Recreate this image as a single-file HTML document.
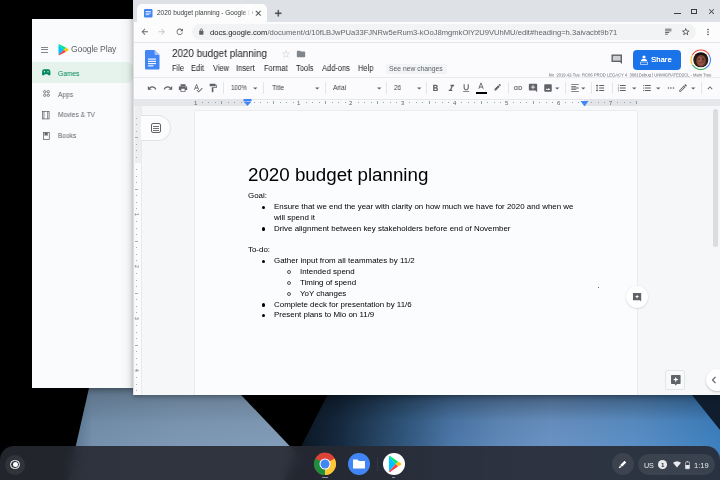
<!DOCTYPE html>
<html><head><meta charset="utf-8">
<style>
*{margin:0;padding:0;box-sizing:border-box}
html,body{width:720px;height:480px;overflow:hidden;background:#000;font-family:"Liberation Sans",sans-serif;position:relative}
.a{position:absolute}
.t{position:absolute;white-space:pre;line-height:1;will-change:transform}
svg.a{overflow:visible}
</style></head><body>
<svg class="a" style="left:0;top:0" width="720" height="480" viewBox="0 0 720 480">
<defs>
<linearGradient id="lg1" gradientUnits="userSpaceOnUse" x1="75" y1="0" x2="287" y2="0">
<stop offset="0" stop-color="#5e7894"/><stop offset="0.08" stop-color="#7591ad"/><stop offset="0.5" stop-color="#7e99b5"/><stop offset="1" stop-color="#829db9"/>
</linearGradient>
<linearGradient id="lg2" gradientUnits="userSpaceOnUse" x1="296" y1="0" x2="720" y2="0">
<stop offset="0" stop-color="#0a1420"/><stop offset="0.1" stop-color="#15293f"/><stop offset="0.245" stop-color="#2f5479"/><stop offset="0.365" stop-color="#4b77a8"/><stop offset="0.48" stop-color="#6089b9"/><stop offset="0.6" stop-color="#6a93c4"/><stop offset="0.8" stop-color="#5a8fc6"/><stop offset="1" stop-color="#3d80c0"/>
</linearGradient>
<linearGradient id="lg3" gradientUnits="userSpaceOnUse" x1="0" y1="395" x2="0" y2="447">
<stop offset="0" stop-color="#000" stop-opacity="0.35"/><stop offset="0.5" stop-color="#000" stop-opacity="0.05"/><stop offset="1" stop-color="#000" stop-opacity="0"/>
</linearGradient>
<linearGradient id="lg4" gradientUnits="userSpaceOnUse" x1="0" y1="388" x2="0" y2="447"><stop offset="0" stop-color="#000" stop-opacity="0.22"/><stop offset="0.6" stop-color="#000" stop-opacity="0.04"/><stop offset="1" stop-color="#000" stop-opacity="0"/></linearGradient>
</defs>
<polygon points="92,375 222,375 322,480 68,480" fill="url(#lg1)"/>
<polygon points="92,375 222,375 322,480 68,480" fill="url(#lg4)"/>
<polygon points="335.2,380 720,380 720,480 284,480" fill="url(#lg2)"/>
<polygon points="335.2,380 720,380 720,480 284,480" fill="url(#lg3)"/>
<polygon points="680,380 720,380 720,430" fill="#0f1d2e"/>
</svg>
<div class="a" style="left:32px;top:19px;width:110px;height:369px;background:#fafbfd;box-shadow:0 2px 6px rgba(0,0,0,0.35)"></div>
<div class="a" style="left:41px;top:46.9px;width:7.4px;height:0.9px;background:#80868b;"></div>
<div class="a" style="left:41px;top:49.2px;width:7.4px;height:0.9px;background:#80868b;"></div>
<div class="a" style="left:41px;top:51.5px;width:7.4px;height:0.9px;background:#80868b;"></div>
<svg class="a" style="left:57.5px;top:43.5px" width="11" height="11.5" viewBox="0 0 22 23">
<path d="M1 1 L12 11.5 L1 22 Z" fill="#00c3ff"/>
<path d="M1 1 L12 11.5 L16 7.5 L3 0.5Z" fill="#00e676"/>
<path d="M1 22 L12 11.5 L16 15.5 L3 22.5Z" fill="#ff3a44"/>
<path d="M12 11.5 L16 7.5 L21 10.5 Q22 11.5 21 12.5 L16 15.5 Z" fill="#ffc107"/>
</svg>
<div class="t" style="left:71.30px;top:45.12px;font-size:8.6px;color:#5f6368;letter-spacing:-0.15px;">Google Play</div>
<div class="a" style="left:32px;top:62px;width:101px;height:20.5px;background:#e6f3ec;border-radius:0 6px 6px 0"></div>
<svg class="a" style="left:42px;top:69px" width="8.5" height="7" viewBox="0 0 24 20"><path d="M6 1h12c3 0 5 2 5.5 5l0.5 9c0 3-3 4.5-5 2.5L16 15H8l-3 2.5C3 19.5 0 18 0 15l0.5-9C1 3 3 1 6 1z" fill="#01875f"/><circle cx="7" cy="8" r="2" fill="#e6f3ec"/><circle cx="17" cy="8" r="2" fill="#e6f3ec"/></svg>
<div class="t" style="left:57.70px;top:69.67px;font-size:7.0px;color:#01875f;transform:scaleX(0.95);transform-origin:0 0;">Games</div>
<svg class="a" style="left:42.8px;top:90.3px" width="7" height="7" viewBox="0 0 14 14" fill="none" stroke="#5f6368" stroke-width="1.6"><circle cx="3.5" cy="3.5" r="2.4"/><circle cx="10.5" cy="3.5" r="2.4"/><circle cx="3.5" cy="10.5" r="2.4"/><circle cx="10.5" cy="10.5" r="2.4"/></svg>
<div class="t" style="left:58.00px;top:90.77px;font-size:7.0px;color:#5f6368;transform:scaleX(0.95);transform-origin:0 0;">Apps</div>
<svg class="a" style="left:42.4px;top:110.5px" width="7.6" height="8.3" viewBox="0 0 16 18" fill="none" stroke="#5f6368" stroke-width="1.6"><rect x="0.8" y="0.8" width="14.4" height="16.4"/><line x1="4" y1="1" x2="4" y2="17"/><line x1="12" y1="1" x2="12" y2="17"/></svg>
<div class="t" style="left:58.00px;top:111.66px;font-size:6.9px;color:#5f6368;transform:scaleX(0.95);transform-origin:0 0;">Movies &amp; TV</div>
<svg class="a" style="left:43.1px;top:131.7px" width="6.7" height="7.9" viewBox="0 0 14 16" fill="none" stroke="#5f6368" stroke-width="1.6"><rect x="0.8" y="0.8" width="12.4" height="14.4"/><path d="M4 1v6l2.5-1.5L9 7V1" fill="#5f6368"/></svg>
<div class="t" style="left:58.00px;top:132.96px;font-size:6.9px;color:#5f6368;transform:scaleX(0.95);transform-origin:0 0;">Books</div>
<div class="a" style="left:119px;top:19px;width:14px;height:369px;background:linear-gradient(90deg,rgba(0,0,0,0),rgba(0,0,0,0.02) 50%,rgba(0,0,0,0.08));"></div>
<div class="a" style="left:133px;top:0px;width:587px;height:395px;background:#dee1e6;box-shadow:0 2px 5px rgba(0,0,0,0.28)"></div>
<div class="a" style="left:137px;top:4px;width:130px;height:19px;background:#fcfcfd;border-radius:5px 5px 0 0"></div>
<svg class="a" style="left:144px;top:9px" width="8.5" height="8.5" viewBox="0 0 16 16"><rect x="0" y="0" width="16" height="16" rx="2" fill="#4285f4"/><rect x="3" y="4" width="10" height="1.5" fill="#fff"/><rect x="3" y="7" width="10" height="1.5" fill="#fff"/><rect x="3" y="10" width="7" height="1.5" fill="#fff"/></svg>
<div class="t" style="left:156.70px;top:10.30px;font-size:6.5px;color:#3c4043;">2020 budget planning - Google D</div>
<div class="a" style="left:242px;top:5px;width:10px;height:14px;background:linear-gradient(90deg,rgba(255,255,255,0),#fff 85%);"></div>
<svg class="a" style="left:254.10px;top:8.90px" width="8.6" height="8.6" viewBox="0 0 24 24"><path d="M19 6.41L17.59 5 12 10.59 6.41 5 5 6.41 10.59 12 5 17.59 6.41 19 12 13.41 17.59 19 19 17.59 13.41 12z" fill="#3c4043" stroke="#3c4043" stroke-width="0.8"/></svg>
<svg class="a" style="left:273.15px;top:7.75px" width="10.5" height="10.5" viewBox="0 0 24 24"><path d="M19 13h-6v6h-2v-6H5v-2h6V5h2v6h6v2z" fill="#3c4043" stroke="#3c4043" stroke-width="0.9"/></svg>
<div class="a" style="left:673.5px;top:12.8px;width:7px;height:1px;background:#3c4043;"></div>
<div class="a" style="left:690.8px;top:8.6px;width:6.2px;height:5.6px;border:1px solid #3c4043"></div>
<svg class="a" style="left:706.90px;top:6.80px" width="9" height="9" viewBox="0 0 24 24"><path d="M19 6.41L17.59 5 12 10.59 6.41 5 5 6.41 10.59 12 5 17.59 6.41 19 12 13.41 17.59 19 19 17.59 13.41 12z" fill="#3c4043" /></svg>
<div class="a" style="left:133px;top:22px;width:587px;height:21px;background:#fcfcfd;"></div>
<div class="a" style="left:133px;top:42px;width:587px;height:1px;background:#e3e5e8;"></div>
<svg class="a" style="left:139.95px;top:26.85px" width="9.5" height="9.5" viewBox="0 0 24 24"><path d="M20 11H7.83l5.59-5.59L12 4l-8 8 8 8 1.41-1.41L7.83 13H20v-2z" fill="#5f6368" /></svg>
<svg class="a" style="left:157.25px;top:26.85px" width="9.5" height="9.5" viewBox="0 0 24 24"><path d="M12 4l-1.41 1.41L16.17 11H4v2h12.17l-5.58 5.59L12 20l8-8z" fill="#c4c7ca" /></svg>
<svg class="a" style="left:174.65px;top:26.85px" width="9.5" height="9.5" viewBox="0 0 24 24"><path d="M17.65 6.35C16.2 4.9 14.21 4 12 4c-4.42 0-7.99 3.58-7.99 8s3.57 8 7.99 8c3.73 0 6.84-2.55 7.73-6h-2.08c-.82 2.33-3.04 4-5.65 4-3.31 0-6-2.69-6-6s2.69-6 6-6c1.66 0 3.14.69 4.22 1.78L13 11h7V4l-2.35 2.35z" fill="#5f6368" /></svg>
<div class="a" style="left:191.5px;top:24px;width:504px;height:15.5px;background:#f1f3f4;border-radius:8px"></div>
<svg class="a" style="left:198.5px;top:28px" width="4.6" height="6.8" viewBox="0 0 10 15"><path d="M2.6 6.5V4.3A2.4 2.4 0 0 1 7.4 4.3V6.5" fill="none" stroke="#5f6368" stroke-width="1.7"/><rect x="0.3" y="6.3" width="9.4" height="8.4" rx="1.2" fill="#5f6368"/></svg>
<div class="t" style="left:209.60px;top:28.57px;font-size:7.6px;color:#202124;">docs.google.com<span style="color:#62666b">/document/d/10fLBJwPUa33FJNRw5eRum3-kOoJ8mgmkOlY2U9VUhMU/edit#heading=h.3aivacbt9b71</span></div>
<svg class="a" style="left:664.15px;top:27.35px" width="8.5" height="8.5" viewBox="0 0 24 24"><path d="M3 5h18v2H3zM3 10h18v2H3zM3 15h12v2H3zM3 19h8v2H3z" fill="#3c4043" /></svg>
<svg class="a" style="left:681.25px;top:26.85px" width="9.5" height="9.5" viewBox="0 0 24 24"><path d="M22 9.24l-7.19-.62L12 2 9.19 8.63 2 9.24l5.46 4.73L5.82 21 12 17.27 18.18 21l-1.63-7.03L22 9.24zM12 15.4l-3.76 2.27 1-4.28-3.32-2.88 4.38-.38L12 6.1l1.71 4.04 4.38.38-3.32 2.88 1 4.28L12 15.4z" fill="#3c4043" /></svg>
<svg class="a" style="left:703.00px;top:26.60px" width="10" height="10" viewBox="0 0 24 24"><path d="M12 8c1.1 0 2-.9 2-2s-.9-2-2-2-2 .9-2 2 .9 2 2 2zm0 2c-1.1 0-2 .9-2 2s.9 2 2 2 2-.9 2-2-.9-2-2-2zm0 6c-1.1 0-2 .9-2 2s.9 2 2 2 2-.9 2-2-.9-2-2-2z" fill="#3c4043" /></svg>
<div class="a" style="left:133px;top:43px;width:587px;height:34px;background:#fbfbfd;"></div>
<svg class="a" style="left:145px;top:50px" width="14.5" height="19.6" viewBox="0 0 29 39"><path d="M2.5 0H19L29 10V36.5C29 37.9 27.9 39 26.5 39H2.5C1.1 39 0 37.9 0 36.5V2.5C0 1.1 1.1 0 2.5 0Z" fill="#4285f4"/><path d="M19 0L29 10H21.5C20.1 10 19 8.9 19 7.5Z" fill="#a1c2fa"/><rect x="6" y="17" width="16" height="2.2" fill="#fff"/><rect x="6" y="21.5" width="16" height="2.2" fill="#fff"/><rect x="6" y="26" width="16" height="2.2" fill="#fff"/><rect x="6" y="30.5" width="11" height="2.2" fill="#fff"/></svg>
<div class="t" style="left:171.50px;top:48.90px;font-size:10.4px;color:#202124;transform:scaleX(0.95);transform-origin:0 0;">2020 budget planning</div>
<svg class="a" style="left:280.50px;top:49.00px" width="10" height="10" viewBox="0 0 24 24"><path d="M22 9.24l-7.19-.62L12 2 9.19 8.63 2 9.24l5.46 4.73L5.82 21 12 17.27 18.18 21l-1.63-7.03L22 9.24zM12 15.4l-3.76 2.27 1-4.28-3.32-2.88 4.38-.38L12 6.1l1.71 4.04 4.38.38-3.32 2.88 1 4.28L12 15.4z" fill="#dadce0" /></svg>
<svg class="a" style="left:296.00px;top:49.00px" width="10" height="10" viewBox="0 0 24 24"><path d="M10 4H4c-1.1 0-1.99.9-1.99 2L2 18c0 1.1.9 2 2 2h16c1.1 0 2-.9 2-2V8c0-1.1-.9-2-2-2h-8l-2-2z" fill="#80868b" /></svg>
<div class="t" style="left:171.80px;top:64.17px;font-size:8.3px;color:#202124;transform:scaleX(0.9);transform-origin:0 0;">File</div>
<div class="t" style="left:191.00px;top:64.17px;font-size:8.3px;color:#202124;transform:scaleX(0.9);transform-origin:0 0;">Edit</div>
<div class="t" style="left:212.50px;top:64.17px;font-size:8.3px;color:#202124;transform:scaleX(0.9);transform-origin:0 0;">View</div>
<div class="t" style="left:236.00px;top:64.17px;font-size:8.3px;color:#202124;transform:scaleX(0.9);transform-origin:0 0;">Insert</div>
<div class="t" style="left:263.80px;top:64.17px;font-size:8.3px;color:#202124;transform:scaleX(0.9);transform-origin:0 0;">Format</div>
<div class="t" style="left:296.00px;top:64.17px;font-size:8.3px;color:#202124;transform:scaleX(0.9);transform-origin:0 0;">Tools</div>
<div class="t" style="left:322.20px;top:64.17px;font-size:8.3px;color:#202124;transform:scaleX(0.9);transform-origin:0 0;">Add-ons</div>
<div class="t" style="left:358.40px;top:64.17px;font-size:8.3px;color:#202124;transform:scaleX(0.9);transform-origin:0 0;">Help</div>
<div class="a" style="left:385.6px;top:64px;width:61px;height:10px;background:#f1f3f4;border-radius:2px"></div>
<div class="t" style="left:388.90px;top:66.19px;font-size:6.75px;color:#5f6368;">See new changes</div>
<svg class="a" style="left:611px;top:54px" width="11.5" height="10.5" viewBox="0 0 23 21"><path d="M1 1H22V20L18 16H1Z" fill="#5f6368"/><rect x="3.8" y="3.8" width="15.4" height="9.4" fill="#cfd0d1"/></svg>
<div class="a" style="left:633.3px;top:50px;width:48px;height:19.5px;background:#1a73e8;border-radius:4px"></div>
<svg class="a" style="left:640px;top:54.5px" width="8" height="10" viewBox="0 0 16 20"><circle cx="8" cy="4" r="3.2" fill="#fff"/><path d="M2 11c0-2 2.5-3 6-3s6 1 6 3v1H2z" fill="#fff"/><path d="M1 14h14v5H1z" fill="none" stroke="#fff" stroke-width="1.2"/></svg>
<div class="t" style="left:651.20px;top:55.70px;font-size:7.8px;color:#ffffff;text-shadow:0 0 0.4px #fff">Share</div>
<svg class="a" style="left:689.9px;top:49px" width="21.6" height="21.6" viewBox="0 0 40 40">
<path d="M4.41 11A18 18 0 0 1 35.59 11" fill="none" stroke="#ea4335" stroke-width="2"/>
<path d="M35.59 11A18 18 0 0 1 29 35.59" fill="none" stroke="#4285f4" stroke-width="2"/>
<path d="M29 35.59A18 18 0 0 1 4.41 29" fill="none" stroke="#34a853" stroke-width="2"/>
<path d="M4.41 29A18 18 0 0 1 4.41 11" fill="none" stroke="#fbbc04" stroke-width="2"/>
<circle cx="20" cy="20" r="14" fill="#2b1b18"/>
<ellipse cx="20.5" cy="22" rx="9" ry="11" fill="#7a4436"/>
<ellipse cx="18" cy="20" rx="4" ry="5" fill="#9a5a48"/>
<path d="M9 13C11 5 30 5 32 14C27 9 14 9 9 13Z" fill="#1a0f0c"/>
<circle cx="16.5" cy="19" r="1.3" fill="#2a1510"/><circle cx="24" cy="19" r="1.3" fill="#2a1510"/>
<path d="M15 27Q20 30 25 27" stroke="#c0645a" stroke-width="1.6" fill="none"/>
</svg>
<div class="t" style="left:548.8px;top:72.6px;font-size:8.3px;color:#5f6368;transform:scale(0.5);transform-origin:0 0">kix_2019.42-Tue_RC06 PROD LEGACY 4_3081Debug | UNMIGRATED2CL - Main Tree</div>
<div class="a" style="left:133px;top:77px;width:587px;height:22px;background:#fbfbfd;"></div>
<div class="a" style="left:133px;top:77px;width:587px;height:0.6px;background:#e8eaed;"></div>
<svg class="a" style="left:146.80px;top:83.00px" width="10" height="10" viewBox="0 0 24 24"><path d="M12.5 8c-2.65 0-5.05.99-6.9 2.6L2 7v9h9l-3.62-3.62c1.39-1.16 3.160-1.88 5.12-1.88 3.54 0 6.55 2.31 7.6 5.5l2.37-.78C21.08 11.030 17.150 8 12.5 8z" fill="#5f6368" /></svg>
<svg class="a" style="left:162.50px;top:83.00px" width="10" height="10" viewBox="0 0 24 24"><path d="M18.4 10.6C16.55 8.99 14.15 8 11.5 8c-4.65 0-8.58 3.03-9.96 7.22L3.9 16c1.05-3.19 4.05-5.5 7.6-5.5 1.95 0 3.73.72 5.12 1.88L13 16h9V7l-3.6 3.6z" fill="#5f6368" /></svg>
<svg class="a" style="left:177.50px;top:83.00px" width="10" height="10" viewBox="0 0 24 24"><path d="M19 8H5c-1.66 0-3 1.34-3 3v6h4v4h12v-4h4v-6c0-1.66-1.34-3-3-3zm-3 11H8v-5h8v5zm3-7c-.55 0-1-.45-1-1s.45-1 1-1 1 .45 1 1-.45 1-1 1zm-1-9H6v4h12V3z" fill="#5f6368" /></svg>
<svg class="a" style="left:192.50px;top:83.00px" width="10" height="10" viewBox="0 0 24 24"><path d="M12.45 16h2.09L9.43 3H7.57L2.46 16h2.09l1.12-3h5.64l1.14 3zm-6.02-5L8.5 5.48 10.570 11H6.43zm15.16.59l-8.09 8.09L9.83 16l-1.41 1.41 5.09 5.09L23 13l-1.41-1.41z" fill="#5f6368" /></svg>
<svg class="a" style="left:208.00px;top:83.00px" width="10" height="10" viewBox="0 0 24 24"><path d="M18 4V3c0-.55-.45-1-1-1H5c-.55 0-1 .45-1 1v4c0 .55.45 1 1 1h12c.55 0 1-.45 1-1V6h1v4H9v11c0 .55.45 1 1 1h2c.55 0 1-.45 1-1v-9h8V4h-3z" fill="#5f6368" /></svg>
<div class="a" style="left:222.5px;top:82px;width:0.7px;height:12px;background:#e3e5e8;"></div>
<div class="a" style="left:263px;top:82px;width:0.7px;height:12px;background:#e3e5e8;"></div>
<div class="a" style="left:324.5px;top:82px;width:0.7px;height:12px;background:#e3e5e8;"></div>
<div class="a" style="left:385.5px;top:82px;width:0.7px;height:12px;background:#e3e5e8;"></div>
<div class="a" style="left:426.2px;top:82px;width:0.7px;height:12px;background:#e3e5e8;"></div>
<div class="a" style="left:508px;top:82px;width:0.7px;height:12px;background:#e3e5e8;"></div>
<div class="a" style="left:564.5px;top:82px;width:0.7px;height:12px;background:#e3e5e8;"></div>
<div class="a" style="left:591px;top:82px;width:0.7px;height:12px;background:#e3e5e8;"></div>
<div class="a" style="left:611.5px;top:82px;width:0.7px;height:12px;background:#e3e5e8;"></div>
<div class="a" style="left:700.6px;top:82px;width:0.7px;height:12px;background:#e3e5e8;"></div>
<div class="t" style="left:231.00px;top:84.96px;font-size:6.9px;color:#3c4043;transform:scaleX(0.9);transform-origin:0 0;">100%</div>
<svg class="a" style="left:250.25px;top:82.75px" width="10.5" height="10.5" viewBox="0 0 24 24"><path d="M7 10l5 5 5-5z" fill="#5f6368" /></svg>
<div class="t" style="left:272.00px;top:84.79px;font-size:7.1px;color:#3c4043;transform:scaleX(0.92);transform-origin:0 0;">Title</div>
<svg class="a" style="left:311.75px;top:82.75px" width="10.5" height="10.5" viewBox="0 0 24 24"><path d="M7 10l5 5 5-5z" fill="#5f6368" /></svg>
<div class="t" style="left:333.30px;top:84.79px;font-size:7.1px;color:#3c4043;transform:scaleX(0.92);transform-origin:0 0;">Arial</div>
<svg class="a" style="left:373.55px;top:82.75px" width="10.5" height="10.5" viewBox="0 0 24 24"><path d="M7 10l5 5 5-5z" fill="#5f6368" /></svg>
<div class="t" style="left:393.80px;top:84.79px;font-size:7.1px;color:#3c4043;transform:scaleX(0.92);transform-origin:0 0;">26</div>
<svg class="a" style="left:413.55px;top:82.75px" width="10.5" height="10.5" viewBox="0 0 24 24"><path d="M7 10l5 5 5-5z" fill="#5f6368" /></svg>
<svg class="a" style="left:430.10px;top:82.60px" width="10.8" height="10.8" viewBox="0 0 24 24"><path d="M15.6 10.79c.97-.67 1.65-1.77 1.65-2.79 0-2.26-1.75-4-4-4H7v14h7.04c2.09 0 3.71-1.7 3.71-3.79 0-1.52-.86-2.82-2.15-3.42zM10 6.5h3c.83 0 1.5.67 1.5 1.5s-.67 1.5-1.5 1.5h-3v-3zm3.5 9H10v-3h3.5c.83 0 1.5.67 1.5 1.5s-.67 1.5-1.5 1.5z" fill="#5f6368" /></svg>
<svg class="a" style="left:445.50px;top:82.60px" width="10.8" height="10.8" viewBox="0 0 24 24"><path d="M10 4v3h2.21l-3.42 8H6v3h8v-3h-2.21l3.42-8H18V4z" fill="#5f6368" /></svg>
<svg class="a" style="left:460.80px;top:83.20px" width="10.4" height="10.4" viewBox="0 0 24 24"><path d="M12 17c3.31 0 6-2.69 6-6V3h-2.5v8c0 1.93-1.57 3.5-3.5 3.5S8.5 12.93 8.5 11V3H6v8c0 3.31 2.69 6 6 6zm-7 2v2h14v-2H5z" fill="#5f6368" /></svg>
<svg class="a" style="left:476.30px;top:82.20px" width="10" height="10" viewBox="0 0 24 24"><path d="M11 2L5.5 16h2.25l1.12-3h6.25l1.12 3h2.25L13 2h-2zm-1.38 9L12 4.67 14.38 11H9.62z" fill="#5f6368" /></svg>
<div class="a" style="left:476.1px;top:92px;width:11.1px;height:2px;background:#000000;"></div>
<svg class="a" style="left:493.00px;top:83.50px" width="9" height="9" viewBox="0 0 24 24"><path d="M17.75 7L14 3.25l-10 10V17h3.75l10-10zm2.96-2.96c.39-.39.39-1.02 0-1.41L18.37.29a.996.996 0 0 0-1.41 0L15 2.25 18.75 6l1.96-1.960z" fill="#5f6368" /></svg>
<svg class="a" style="left:513.00px;top:83.00px" width="10" height="10" viewBox="0 0 24 24"><path d="M3.9 12c0-1.71 1.39-3.1 3.1-3.1h4V7H7c-2.76 0-5 2.24-5 5s2.24 5 5 5h4v-1.9H7c-1.71 0-3.1-1.39-3.1-3.1zM8 13h8v-2H8v2zm9-6h-4v1.9h4c1.71 0 3.1 1.39 3.1 3.1s-1.39 3.1-3.1 3.1h-4V17h4c2.76 0 5-2.24 5-5s-2.24-5-5-5z" fill="#5f6368" /></svg>
<svg class="a" style="left:528.30px;top:83.00px" width="10" height="10" viewBox="0 0 24 24"><path d="M20 2H4c-1.1 0-2 .9-2 2v12c0 1.1.9 2 2 2h14l4 4V4c0-1.1-.9-2-2-2zm-3 9h-4v4h-2v-4H7V9h4V5h2v4h4v2z" fill="#5f6368" /></svg>
<svg class="a" style="left:542.50px;top:83.00px" width="10" height="10" viewBox="0 0 24 24"><path d="M19 3H5c-1.1 0-2 .9-2 2v14c0 1.1.9 2 2 2h14c1.1 0 2-.9 2-2V5c0-1.1-.9-2-2-2zm-5.04 9.29l-2.75 3.54-1.96-2.36L6.5 17h11l-3.54-4.71z" fill="#5f6368" fill-rule="evenodd"/></svg>
<svg class="a" style="left:551.75px;top:82.75px" width="10.5" height="10.5" viewBox="0 0 24 24"><path d="M7 10l5 5 5-5z" fill="#5f6368" /></svg>
<svg class="a" style="left:569.50px;top:83.00px" width="10" height="10" viewBox="0 0 24 24"><path d="M15 15H3v2h12v-2zm0-8H3v2h12V7zM3 13h18v-2H3v2zm0 8h18v-2H3v2zM3 3v2h18V3H3z" fill="#5f6368" /></svg>
<svg class="a" style="left:578.05px;top:82.75px" width="10.5" height="10.5" viewBox="0 0 24 24"><path d="M7 10l5 5 5-5z" fill="#5f6368" /></svg>
<svg class="a" style="left:595.40px;top:83.00px" width="10" height="10" viewBox="0 0 24 24"><path d="M6 7h2.5L5 3.5 1.5 7H4v10H1.5L5 20.5 8.5 17H6V7zm4-2v2h12V5H10zm0 14h12v-2H10v2zm0-6h12v-2H10v2z" fill="#5f6368" /></svg>
<svg class="a" style="left:617.40px;top:83.00px" width="10" height="10" viewBox="0 0 24 24"><path d="M2 17h2v.5H3v1h1v.5H2v1h3v-4H2v1zm1-9h1V4H2v1h1v3zm-1 3h1.8L2 13.1v.9h3v-1H3.2L5 10.9V10H2v1zm5-6v2h14V5H7zm0 14h14v-2H7v2zm0-6h14v-2H7v2z" fill="#5f6368" /></svg>
<svg class="a" style="left:628.65px;top:82.75px" width="10.5" height="10.5" viewBox="0 0 24 24"><path d="M7 10l5 5 5-5z" fill="#5f6368" /></svg>
<svg class="a" style="left:642.10px;top:83.00px" width="10" height="10" viewBox="0 0 24 24"><path d="M4 10.5c-.83 0-1.5.67-1.5 1.5s.67 1.5 1.5 1.5 1.5-.67 1.5-1.5-.67-1.5-1.5-1.5zm0-6c-.83 0-1.5.67-1.5 1.5S3.17 7.5 4 7.5 5.5 6.83 5.5 6 4.830 4.5 4 4.5zm0 12c-.83 0-1.5.68-1.5 1.5s.68 1.5 1.5 1.5 1.5-.68 1.5-1.5-.67-1.5-1.5-1.5zM7 19h14v-2H7v2zm0-6h14v-2H7v2zm0-8v2h14V5H7z" fill="#5f6368" /></svg>
<svg class="a" style="left:653.15px;top:82.75px" width="10.5" height="10.5" viewBox="0 0 24 24"><path d="M7 10l5 5 5-5z" fill="#5f6368" /></svg>
<svg class="a" style="left:666.00px;top:83.00px" width="10" height="10" viewBox="0 0 24 24"><path d="M6 10c-1.1 0-2 .9-2 2s.9 2 2 2 2-.9 2-2-.9-2-2-2zm12 0c-1.1 0-2 .9-2 2s.9 2 2 2 2-.9 2-2-.9-2-2-2zm-6 0c-1.1 0-2 .9-2 2s.9 2 2 2 2-.9 2-2-.9-2-2-2z" fill="#5f6368" /></svg>
<svg class="a" style="left:678.10px;top:83.00px" width="10" height="10" viewBox="0 0 24 24"><path d="M3 17.25V21h3.75L17.81 9.94l-3.75-3.75L3 17.25zM5.92 19H5v-.92l9.06-9.06.92.92L5.92 19zM20.71 5.63l-2.34-2.34c-.2-.2-.45-.29-.71-.29s-.51.1-.7.29l-1.83 1.83 3.75 3.75 1.830-1.83c.39-.39.39-1.02 0-1.41z" fill="#5f6368" /></svg>
<svg class="a" style="left:687.55px;top:82.75px" width="10.5" height="10.5" viewBox="0 0 24 24"><path d="M7 10l5 5 5-5z" fill="#5f6368" /></svg>
<svg class="a" style="left:705.00px;top:83.00px" width="10" height="10" viewBox="0 0 24 24"><path d="M12 8l-6 6 1.41 1.41L12 10.83l4.59 4.58L18 14z" fill="#5f6368" /></svg>
<div class="a" style="left:133px;top:98.5px;width:587px;height:7.5px;background:#e6e7ea;"></div>
<div class="a" style="left:195px;top:99.5px;width:442px;height:6.5px;background:#f8f9fa;"></div>
<div class="a" style="left:195px;top:98.5px;width:52px;height:8px;background:#e2e4e8;"></div>
<div class="a" style="left:584px;top:98.5px;width:53px;height:8px;background:#e2e4e8;"></div>
<div class="t" style="left:193.50px;top:99.72px;font-size:6px;color:#5f6368;">1</div>
<div class="a" style="left:201.5px;top:101.8px;width:0.7px;height:1.3px;background:#9aa0a6;"></div>
<div class="a" style="left:208.0px;top:101.8px;width:0.7px;height:1.3px;background:#9aa0a6;"></div>
<div class="a" style="left:214.5px;top:101.8px;width:0.7px;height:1.3px;background:#9aa0a6;"></div>
<div class="a" style="left:221.0px;top:100.5px;width:0.7px;height:3.5px;background:#9aa0a6;"></div>
<div class="a" style="left:227.5px;top:101.8px;width:0.7px;height:1.3px;background:#9aa0a6;"></div>
<div class="a" style="left:234.0px;top:101.8px;width:0.7px;height:1.3px;background:#9aa0a6;"></div>
<div class="a" style="left:240.5px;top:101.8px;width:0.7px;height:1.3px;background:#9aa0a6;"></div>
<div class="a" style="left:253.5px;top:101.8px;width:0.7px;height:1.3px;background:#9aa0a6;"></div>
<div class="a" style="left:260.0px;top:101.8px;width:0.7px;height:1.3px;background:#9aa0a6;"></div>
<div class="a" style="left:266.5px;top:101.8px;width:0.7px;height:1.3px;background:#9aa0a6;"></div>
<div class="a" style="left:273.0px;top:100.5px;width:0.7px;height:3.5px;background:#9aa0a6;"></div>
<div class="a" style="left:279.5px;top:101.8px;width:0.7px;height:1.3px;background:#9aa0a6;"></div>
<div class="a" style="left:286.0px;top:101.8px;width:0.7px;height:1.3px;background:#9aa0a6;"></div>
<div class="a" style="left:292.5px;top:101.8px;width:0.7px;height:1.3px;background:#9aa0a6;"></div>
<div class="t" style="left:297.30px;top:99.72px;font-size:6px;color:#5f6368;">1</div>
<div class="a" style="left:305.5px;top:101.8px;width:0.7px;height:1.3px;background:#9aa0a6;"></div>
<div class="a" style="left:312.0px;top:101.8px;width:0.7px;height:1.3px;background:#9aa0a6;"></div>
<div class="a" style="left:318.5px;top:101.8px;width:0.7px;height:1.3px;background:#9aa0a6;"></div>
<div class="a" style="left:325.0px;top:100.5px;width:0.7px;height:3.5px;background:#9aa0a6;"></div>
<div class="a" style="left:331.5px;top:101.8px;width:0.7px;height:1.3px;background:#9aa0a6;"></div>
<div class="a" style="left:338.0px;top:101.8px;width:0.7px;height:1.3px;background:#9aa0a6;"></div>
<div class="a" style="left:344.5px;top:101.8px;width:0.7px;height:1.3px;background:#9aa0a6;"></div>
<div class="t" style="left:349.20px;top:99.72px;font-size:6px;color:#5f6368;">2</div>
<div class="a" style="left:357.5px;top:101.8px;width:0.7px;height:1.3px;background:#9aa0a6;"></div>
<div class="a" style="left:364.0px;top:101.8px;width:0.7px;height:1.3px;background:#9aa0a6;"></div>
<div class="a" style="left:370.5px;top:101.8px;width:0.7px;height:1.3px;background:#9aa0a6;"></div>
<div class="a" style="left:377.0px;top:100.5px;width:0.7px;height:3.5px;background:#9aa0a6;"></div>
<div class="a" style="left:383.0px;top:101.8px;width:0.7px;height:1.3px;background:#9aa0a6;"></div>
<div class="a" style="left:389.5px;top:101.8px;width:0.7px;height:1.3px;background:#9aa0a6;"></div>
<div class="a" style="left:396.0px;top:101.8px;width:0.7px;height:1.3px;background:#9aa0a6;"></div>
<div class="t" style="left:401.10px;top:99.72px;font-size:6px;color:#5f6368;">3</div>
<div class="a" style="left:409.0px;top:101.8px;width:0.7px;height:1.3px;background:#9aa0a6;"></div>
<div class="a" style="left:415.5px;top:101.8px;width:0.7px;height:1.3px;background:#9aa0a6;"></div>
<div class="a" style="left:422.0px;top:101.8px;width:0.7px;height:1.3px;background:#9aa0a6;"></div>
<div class="a" style="left:428.5px;top:100.5px;width:0.7px;height:3.5px;background:#9aa0a6;"></div>
<div class="a" style="left:435.0px;top:101.8px;width:0.7px;height:1.3px;background:#9aa0a6;"></div>
<div class="a" style="left:441.5px;top:101.8px;width:0.7px;height:1.3px;background:#9aa0a6;"></div>
<div class="a" style="left:448.0px;top:101.8px;width:0.7px;height:1.3px;background:#9aa0a6;"></div>
<div class="t" style="left:453.00px;top:99.72px;font-size:6px;color:#5f6368;">4</div>
<div class="a" style="left:461.0px;top:101.8px;width:0.7px;height:1.3px;background:#9aa0a6;"></div>
<div class="a" style="left:467.5px;top:101.8px;width:0.7px;height:1.3px;background:#9aa0a6;"></div>
<div class="a" style="left:474.0px;top:101.8px;width:0.7px;height:1.3px;background:#9aa0a6;"></div>
<div class="a" style="left:480.5px;top:100.5px;width:0.7px;height:3.5px;background:#9aa0a6;"></div>
<div class="a" style="left:487.0px;top:101.8px;width:0.7px;height:1.3px;background:#9aa0a6;"></div>
<div class="a" style="left:493.5px;top:101.8px;width:0.7px;height:1.3px;background:#9aa0a6;"></div>
<div class="a" style="left:500.0px;top:101.8px;width:0.7px;height:1.3px;background:#9aa0a6;"></div>
<div class="t" style="left:504.90px;top:99.72px;font-size:6px;color:#5f6368;">5</div>
<div class="a" style="left:513.0px;top:101.8px;width:0.7px;height:1.3px;background:#9aa0a6;"></div>
<div class="a" style="left:519.5px;top:101.8px;width:0.7px;height:1.3px;background:#9aa0a6;"></div>
<div class="a" style="left:526.0px;top:101.8px;width:0.7px;height:1.3px;background:#9aa0a6;"></div>
<div class="a" style="left:532.5px;top:100.5px;width:0.7px;height:3.5px;background:#9aa0a6;"></div>
<div class="a" style="left:539.0px;top:101.8px;width:0.7px;height:1.3px;background:#9aa0a6;"></div>
<div class="a" style="left:545.5px;top:101.8px;width:0.7px;height:1.3px;background:#9aa0a6;"></div>
<div class="a" style="left:552.0px;top:101.8px;width:0.7px;height:1.3px;background:#9aa0a6;"></div>
<div class="t" style="left:556.80px;top:99.72px;font-size:6px;color:#5f6368;">6</div>
<div class="a" style="left:565.0px;top:101.8px;width:0.7px;height:1.3px;background:#9aa0a6;"></div>
<div class="a" style="left:571.5px;top:101.8px;width:0.7px;height:1.3px;background:#9aa0a6;"></div>
<div class="a" style="left:578.0px;top:101.8px;width:0.7px;height:1.3px;background:#9aa0a6;"></div>
<div class="a" style="left:584.5px;top:100.5px;width:0.7px;height:3.5px;background:#9aa0a6;"></div>
<div class="a" style="left:591.0px;top:101.8px;width:0.7px;height:1.3px;background:#9aa0a6;"></div>
<div class="a" style="left:597.5px;top:101.8px;width:0.7px;height:1.3px;background:#9aa0a6;"></div>
<div class="a" style="left:604.0px;top:101.8px;width:0.7px;height:1.3px;background:#9aa0a6;"></div>
<div class="t" style="left:608.70px;top:99.72px;font-size:6px;color:#5f6368;">7</div>
<div class="a" style="left:617.0px;top:101.8px;width:0.7px;height:1.3px;background:#9aa0a6;"></div>
<div class="a" style="left:623.5px;top:101.8px;width:0.7px;height:1.3px;background:#9aa0a6;"></div>
<div class="a" style="left:630.0px;top:101.8px;width:0.7px;height:1.3px;background:#9aa0a6;"></div>
<div class="a" style="left:636.0px;top:100.5px;width:0.7px;height:3.5px;background:#9aa0a6;"></div>
<svg class="a" style="left:242.5px;top:99px" width="9" height="7" viewBox="0 0 9 7"><rect x="0.5" y="0" width="8" height="2" fill="#4285f4"/><path d="M0.5 2.5H8.5L4.5 7Z" fill="#4285f4"/></svg>
<svg class="a" style="left:580px;top:100.5px" width="9" height="6" viewBox="0 0 9 6"><path d="M0.5 0H8.5L4.5 5.5Z" fill="#4285f4"/></svg>
<div class="a" style="left:133px;top:106px;width:587px;height:289px;background:#f6f7f9;"></div>
<div class="a" style="left:134.5px;top:106px;width:6px;height:289px;background:#fbfbfd;"></div>
<div class="a" style="left:134.5px;top:106px;width:6px;height:57px;background:#eceef0;"></div>
<div class="a" style="left:140.5px;top:106px;width:0.6px;height:289px;background:#e8eaed;"></div>
<div class="a" style="left:136px;top:117.5875px;width:1.0px;height:0.8px;background:#a8acb0;"></div>
<div class="a" style="left:136px;top:124.075px;width:1.0px;height:0.8px;background:#a8acb0;"></div>
<div class="a" style="left:136px;top:130.5625px;width:1.0px;height:0.8px;background:#a8acb0;"></div>
<div class="a" style="left:135.2px;top:137.05px;width:3.2px;height:0.7px;background:#a8acb0;"></div>
<div class="a" style="left:136px;top:143.5375px;width:1.0px;height:0.8px;background:#a8acb0;"></div>
<div class="a" style="left:136px;top:150.025px;width:1.0px;height:0.8px;background:#a8acb0;"></div>
<div class="a" style="left:136px;top:156.5125px;width:1.0px;height:0.8px;background:#a8acb0;"></div>
<div class="a" style="left:136px;top:169.4875px;width:1.0px;height:0.8px;background:#a8acb0;"></div>
<div class="a" style="left:136px;top:175.975px;width:1.0px;height:0.8px;background:#a8acb0;"></div>
<div class="a" style="left:136px;top:182.4625px;width:1.0px;height:0.8px;background:#a8acb0;"></div>
<div class="a" style="left:135.2px;top:188.95px;width:3.2px;height:0.7px;background:#a8acb0;"></div>
<div class="a" style="left:136px;top:195.4375px;width:1.0px;height:0.8px;background:#a8acb0;"></div>
<div class="a" style="left:136px;top:201.925px;width:1.0px;height:0.8px;background:#a8acb0;"></div>
<div class="a" style="left:136px;top:208.4125px;width:1.0px;height:0.8px;background:#a8acb0;"></div>
<div class="t" style="left:135.40px;top:212.47px;font-size:5px;color:#5f6368;transform:rotate(90deg);transform-origin:1.4px 2.4px">1</div>
<div class="a" style="left:136px;top:221.3875px;width:1.0px;height:0.8px;background:#a8acb0;"></div>
<div class="a" style="left:136px;top:227.875px;width:1.0px;height:0.8px;background:#a8acb0;"></div>
<div class="a" style="left:136px;top:234.3625px;width:1.0px;height:0.8px;background:#a8acb0;"></div>
<div class="a" style="left:135.2px;top:240.85px;width:3.2px;height:0.7px;background:#a8acb0;"></div>
<div class="a" style="left:136px;top:247.33749999999998px;width:1.0px;height:0.8px;background:#a8acb0;"></div>
<div class="a" style="left:136px;top:253.825px;width:1.0px;height:0.8px;background:#a8acb0;"></div>
<div class="a" style="left:136px;top:260.3125px;width:1.0px;height:0.8px;background:#a8acb0;"></div>
<div class="t" style="left:135.40px;top:264.37px;font-size:5px;color:#5f6368;transform:rotate(90deg);transform-origin:1.4px 2.4px">2</div>
<div class="a" style="left:136px;top:273.2875px;width:1.0px;height:0.8px;background:#a8acb0;"></div>
<div class="a" style="left:136px;top:279.775px;width:1.0px;height:0.8px;background:#a8acb0;"></div>
<div class="a" style="left:136px;top:286.2625px;width:1.0px;height:0.8px;background:#a8acb0;"></div>
<div class="a" style="left:135.2px;top:292.75px;width:3.2px;height:0.7px;background:#a8acb0;"></div>
<div class="a" style="left:136px;top:299.23749999999995px;width:1.0px;height:0.8px;background:#a8acb0;"></div>
<div class="a" style="left:136px;top:305.725px;width:1.0px;height:0.8px;background:#a8acb0;"></div>
<div class="a" style="left:136px;top:312.2125px;width:1.0px;height:0.8px;background:#a8acb0;"></div>
<div class="t" style="left:135.40px;top:316.27px;font-size:5px;color:#5f6368;transform:rotate(90deg);transform-origin:1.4px 2.4px">3</div>
<div class="a" style="left:136px;top:325.1875px;width:1.0px;height:0.8px;background:#a8acb0;"></div>
<div class="a" style="left:136px;top:331.67499999999995px;width:1.0px;height:0.8px;background:#a8acb0;"></div>
<div class="a" style="left:136px;top:338.1625px;width:1.0px;height:0.8px;background:#a8acb0;"></div>
<div class="a" style="left:135.2px;top:344.65px;width:3.2px;height:0.7px;background:#a8acb0;"></div>
<div class="a" style="left:136px;top:351.1375px;width:1.0px;height:0.8px;background:#a8acb0;"></div>
<div class="a" style="left:136px;top:357.625px;width:1.0px;height:0.8px;background:#a8acb0;"></div>
<div class="a" style="left:136px;top:364.11249999999995px;width:1.0px;height:0.8px;background:#a8acb0;"></div>
<div class="t" style="left:135.40px;top:368.17px;font-size:5px;color:#5f6368;transform:rotate(90deg);transform-origin:1.4px 2.4px">4</div>
<div class="a" style="left:136px;top:377.0875px;width:1.0px;height:0.8px;background:#a8acb0;"></div>
<div class="a" style="left:136px;top:383.575px;width:1.0px;height:0.8px;background:#a8acb0;"></div>
<div class="a" style="left:136px;top:390.0625px;width:1.0px;height:0.8px;background:#a8acb0;"></div>
<div class="a" style="left:140.5px;top:115.2px;width:30.5px;height:26px;background:#fcfcfd;border-radius:0 13px 13px 0;border:0.8px solid #e2e3e5;border-left:none"></div>
<div class="a" style="left:151.3px;top:123.4px;width:9.6px;height:9.5px;border:1.2px solid #5f6368;border-radius:2px"></div>
<div class="a" style="left:153.3px;top:125.9px;width:5.6px;height:0.9px;background:#6f7378;"></div>
<div class="a" style="left:153.3px;top:127.8px;width:5.6px;height:0.9px;background:#6f7378;"></div>
<div class="a" style="left:153.3px;top:129.7px;width:5.6px;height:0.9px;background:#6f7378;"></div>
<div class="a" style="left:195px;top:111px;width:441.5px;height:284px;background:#fbfcfe;box-shadow:0 0 1px rgba(0,0,0,0.25)"></div>
<div class="a" style="left:713.3px;top:108.5px;width:5px;height:138px;background:#dadce0;border-radius:2.5px"></div>
<div class="t" style="left:248.30px;top:165.73px;font-size:18.75px;color:#000000;">2020 budget planning</div>
<div class="t" style="left:248.30px;top:192.39px;font-size:7.93px;color:#000;">Goal:</div>
<div class="a" style="left:262.10px;top:205.82px;width:3.4px;height:3.4px;border-radius:50%;background:#000"></div>
<div class="t" style="left:273.90px;top:203.21px;font-size:7.93px;color:#000;">Ensure that we end the year with clarity on how much we have for 2020 and when we</div>
<div class="t" style="left:273.90px;top:214.03px;font-size:7.93px;color:#000;">will spend it</div>
<div class="a" style="left:262.10px;top:227.46px;width:3.4px;height:3.4px;border-radius:50%;background:#000"></div>
<div class="t" style="left:273.90px;top:224.85px;font-size:7.93px;color:#000;">Drive alignment between key stakeholders before end of November</div>
<div class="t" style="left:248.30px;top:246.49px;font-size:7.93px;color:#000;">To-do:</div>
<div class="a" style="left:262.10px;top:259.92px;width:3.4px;height:3.4px;border-radius:50%;background:#000"></div>
<div class="t" style="left:273.90px;top:257.31px;font-size:7.93px;color:#000;">Gather input from all teammates by 11/2</div>
<div class="a" style="left:287.10px;top:270.44px;width:4px;height:4px;border-radius:50%;border:0.75px solid #555"></div>
<div class="t" style="left:299.70px;top:268.13px;font-size:7.93px;color:#000;">Intended spend</div>
<div class="a" style="left:287.10px;top:281.26px;width:4px;height:4px;border-radius:50%;border:0.75px solid #555"></div>
<div class="t" style="left:299.70px;top:278.95px;font-size:7.93px;color:#000;">Timing of spend</div>
<div class="a" style="left:287.10px;top:292.08px;width:4px;height:4px;border-radius:50%;border:0.75px solid #555"></div>
<div class="t" style="left:299.70px;top:289.77px;font-size:7.93px;color:#000;">YoY changes</div>
<div class="a" style="left:262.10px;top:303.20px;width:3.4px;height:3.4px;border-radius:50%;background:#000"></div>
<div class="t" style="left:273.90px;top:300.59px;font-size:7.93px;color:#000;">Complete deck for presentation by 11/6</div>
<div class="a" style="left:262.10px;top:314.02px;width:3.4px;height:3.4px;border-radius:50%;background:#000"></div>
<div class="t" style="left:273.90px;top:311.41px;font-size:7.93px;color:#000;">Present plans to Mio on 11/9</div>
<div class="a" style="left:597.6px;top:286.6px;width:1px;height:1px;background:#5f6368;"></div>
<div class="a" style="left:626.2px;top:286.2px;width:22px;height:22px;border-radius:50%;background:#fff;box-shadow:0 0.5px 1.5px rgba(60,64,67,0.25)"></div>
<svg class="a" style="left:633px;top:293px" width="8.6" height="8.6" viewBox="0 0 20 20"><path d="M0 0H19V20L16 17H0Z" fill="#5f6368"/><path d="M9.5 3.5L10.8 7.2L14.5 8.5L10.8 9.8L9.5 13.5L8.2 9.8L4.5 8.5L8.2 7.2Z" fill="#fff"/></svg>
<div class="a" style="left:665.4px;top:370.4px;width:20px;height:20px;border-radius:2px;background:#f8f9fa;border:0.7px solid #e3e5e8"></div>
<svg class="a" style="left:670.7px;top:375px" width="9.6" height="11" viewBox="0 0 20 23"><path d="M1.5 0H18.5Q20 0 20 1.5V17.5Q20 19 18.5 19H12.5L10 22L7.5 19H1.5Q0 19 0 17.5V1.5Q0 0 1.5 0Z" fill="#5f6368"/><path d="M10 3.5L11.6 7.9L16 9.5L11.6 11.1L10 15.5L8.4 11.1L4 9.5L8.4 7.9Z" fill="#fff"/></svg>
<div class="a" style="left:706px;top:369px;width:22px;height:22px;border-radius:50%;background:#fff;box-shadow:0 1px 2px rgba(60,64,67,0.3)"></div>
<svg class="a" style="left:711px;top:376px" width="6" height="8" viewBox="0 0 6 8"><path d="M4.5 0.8L1.5 4L4.5 7.2" fill="none" stroke="#5f6368" stroke-width="1.2"/></svg>
<div class="a" style="left:133px;top:0px;width:1px;height:395px;background:#dcdee1;"></div>
<div class="a" style="left:0px;top:446px;width:720px;height:34px;background:rgba(39,41,50,0.9);border-radius:14px 14px 0 0;backdrop-filter:blur(6px)"></div>
<div class="a" style="left:5px;top:454.5px;width:20px;height:20px;border-radius:50%;background:rgba(255,255,255,0.07)"></div>
<div class="a" style="left:10.3px;top:459.8px;width:9.4px;height:9.4px;border-radius:50%;border:0.9px solid #fff"></div>
<div class="a" style="left:12.5px;top:462px;width:5px;height:5px;border-radius:50%;background:#fff"></div>
<svg class="a" style="left:314px;top:453px" width="22" height="22" viewBox="0 0 48 48">
<path d="M24 24L11.3 2.0A24 24 0 0 1 44.8 12Z" fill="#db4437"/>
<circle cx="24" cy="24" r="24" fill="#db4437"/>
<path d="M24 24L44.8 12A24 24 0 0 1 24 48Z" fill="#fcc934"/>
<path d="M24 24L24 48A24 24 0 0 1 3.2 12Z" fill="#1e8e3e"/>
<path d="M3.2 12A24 24 0 0 1 44.8 12L24 12Z" fill="#db4437"/>
<circle cx="24" cy="24" r="12" fill="#fff"/>
<circle cx="24" cy="24" r="9.8" fill="#4285f4"/>
</svg>
<div class="a" style="left:322px;top:477.3px;width:6px;height:1px;background:#8a8e94;"></div>
<svg class="a" style="left:348px;top:453px" width="22" height="22" viewBox="0 0 48 48">
<circle cx="24" cy="24" r="24" fill="#4285f4"/>
<path d="M11 14H20.5L24 17.5H37V34H11Z" fill="#fff"/>
</svg>
<div class="a" style="left:376.5px;top:457px;width:0.8px;height:14px;background:rgba(255,255,255,0.06);"></div>
<svg class="a" style="left:383px;top:453px" width="22" height="22" viewBox="0 0 48 48">
<circle cx="24" cy="24" r="24" fill="#fff"/>
<path d="M13 7L28 24L13 41Z" fill="#00c3ff"/>
<path d="M13 7L28 24L33 19L15 6Z" fill="#00e676"/>
<path d="M13 41L28 24L33 29L15 42Z" fill="#ff3a44"/>
<path d="M28 24L33 19L39.5 22.5Q41 24 39.5 25.5L33 29Z" fill="#ffc107"/>
</svg>
<div class="a" style="left:392px;top:477.3px;width:3px;height:1px;background:#8a8e94;"></div>
<div class="a" style="left:611.5px;top:453px;width:22px;height:22px;border-radius:50%;background:rgba(255,255,255,0.08)"></div>
<svg class="a" style="left:618px;top:459.5px" width="9" height="9" viewBox="0 0 18 18"><path d="M13 1.5L16.5 5L8 13.5L4.5 10Z" fill="#fff"/><path d="M4 11L7 14L2.5 16.5L1.5 15.5Z" fill="#fff"/></svg>
<div class="a" style="left:637.5px;top:453.7px;width:77.5px;height:21.3px;border-radius:10.7px;background:rgba(255,255,255,0.08)"></div>
<div class="t" style="left:644.20px;top:461.71px;font-size:7.2px;color:#e8eaed;letter-spacing:-0.3px;">US</div>
<div class="a" style="left:658px;top:460.4px;width:8.7px;height:8.7px;border-radius:50%;background:#e8eaed"></div>
<div class="t" style="left:660.60px;top:461.95px;font-size:6.2px;color:#2a2d35;font-weight:bold;">1</div>
<svg class="a" style="left:672.5px;top:461px" width="8" height="7" viewBox="0 0 16 14"><path d="M0 3.5Q8 -3 16 3.5L8 13Z" fill="#e8eaed"/></svg>
<svg class="a" style="left:685px;top:460.5px" width="5" height="8" viewBox="0 0 10 16"><rect x="3.5" y="0" width="3" height="1.6" fill="#e8eaed"/><rect x="1" y="2.1" width="8" height="13.4" rx="0.8" fill="none" stroke="#e8eaed" stroke-width="1.1"/><rect x="1" y="8" width="8" height="7.5" fill="#e8eaed"/></svg>
<div class="t" style="left:693.70px;top:461.55px;font-size:7.5px;color:#e8eaed;">1:19</div>
</body></html>
